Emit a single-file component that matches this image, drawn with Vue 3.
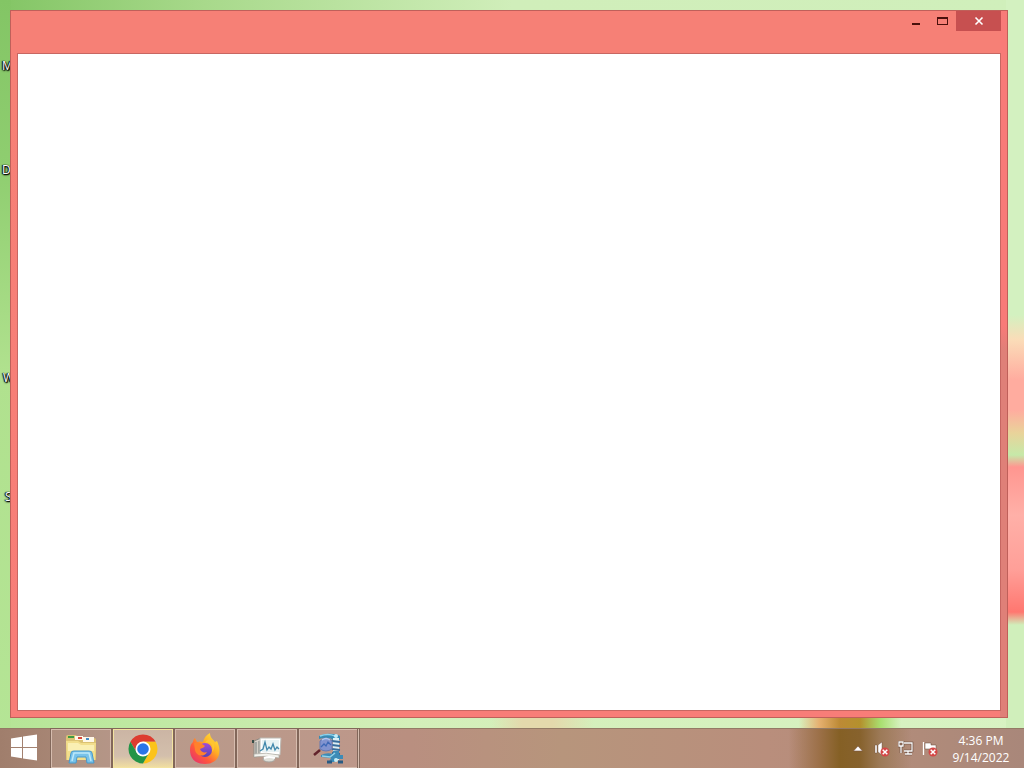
<script setup>
const shortcuts = [
  { label: 'M', top: 58, left: 2 },
  { label: 'D', top: 162, left: 2 },
  { label: 'W', top: 370, left: 3 },
  { label: 'S', top: 489, left: 5 },
]
</script>

<template>
  <div class="desktop">
    <main class="workspace">
      <span
        v-for="item in shortcuts"
        :key="item.label"
        class="shortcut"
        :style="{ top: item.top + 'px', left: item.left + 'px' }"
      >{{ item.label }}</span>
      <section class="window">
        <header class="titlebar">
          <button class="control" aria-label="Minimize">
            <svg width="10" height="10" viewBox="0 0 10 10"><path d="M1 7h8v2H1z" fill="#4a100c" /></svg>
          </button>
          <button class="control" aria-label="Maximize">
            <svg width="11" height="10" viewBox="0 0 11 10"><path d="M0 1h11v8H0zM1 3v5h9V3z" fill="#4a100c" fill-rule="evenodd" /></svg>
          </button>
          <button class="control close" aria-label="Close">
            <svg width="10" height="10" viewBox="0 0 10 10"><path d="M1.500 1.500l7 7M8.500 1.500l-7 7" stroke="#fff" stroke-width="1.600" /></svg>
          </button>
        </header>
        <div class="content"></div>
      </section>
    </main>

    <footer class="taskbar">
      <button class="start" aria-label="Start">
        <svg width="28" height="28" viewBox="0 0 28 28" fill="#fff">
          <path d="M1 4.500L12 2.800V13H1zM13 2.600L27 .5V13H13zM1 14h11v10.200L1 22.600zM13 14h14v12.500L13 24.400z" />
        </svg>
      </button>

      <nav class="apps">
        <button class="app" aria-label="File Explorer">
          <svg width="34" height="32" viewBox="0 0 34 32">
            <path d="M2 4q0-2 2-2h8l2 3h16q2 0 2 2v20H2z" fill="#dcc273" />
            <path d="M4 3h6v2H4z" fill="#3e9b43" />
            <path d="M11 3h8v4h-8zM19 4h11v5H19z" fill="#fff8e8" />
            <path d="M14 4h4v2h-4z" fill="#d7483a" />
            <path d="M22 5h3v2h-3z" fill="#438bc5" />
            <path d="M2 8h12l3 2h15l-1 17H3z" fill="#f2de8c" />
            <path d="M4 10h10l3 2h13v6H4z" fill="#faefb3" />
            <path d="M5 30l2-10q0-2 3-2h15q3 0 3 2l2 10h-7l-1-6H13l-1 6z" fill="#79c3ea" stroke="#4899cb" />
            <path d="M8 28l2-8h15l2 8" fill="none" stroke="#bce9fa" stroke-width="1.500" />
          </svg>
        </button>
        <button class="app active" aria-label="Google Chrome">
          <svg width="30" height="30" viewBox="0 0 30 30">
            <path d="M2.400 7.800A14.500 14.500 0 0 1 27.600 7.800H15L8.800 18.600z" fill="#dd3c30" />
            <path d="M27.600 7.800A14.500 14.500 0 0 1 15 29.500L21.200 18.600 15 7.800z" fill="#fbc31a" />
            <path d="M2.400 7.800A14.500 14.500 0 0 0 15 29.500l6.200-10.900H8.800z" fill="#239447" />
            <circle cx="15" cy="15" r="7.500" fill="#fff" />
            <circle cx="15" cy="15" r="5.800" fill="#2a75e8" />
          </svg>
        </button>
        <button class="app" aria-label="Firefox">
          <svg width="32" height="32" viewBox="0 0 32 32">
            <defs>
              <linearGradient id="fox" x1="1" y1="0" x2=".1" y2="1">
                <stop offset="0" stop-color="#fff145" />
                <stop offset=".4" stop-color="#ffae24" />
                <stop offset=".68" stop-color="#ff583b" />
                <stop offset="1" stop-color="#e42f72" />
              </linearGradient>
              <linearGradient id="globe" x1="0" y1="0" x2="0" y2="1">
                <stop offset="0" stop-color="#a14bd8" />
                <stop offset="1" stop-color="#5644b4" />
              </linearGradient>
            </defs>
            <path d="M6 5l2 4q3-1 6 0c1-4 3-7 7-9 0 5 3 6 5 9l2-1c5 10 3 23-12 23C5 31 1 24 1 17c0-4 1-6 3-8 0-2 1-3 2-4z" fill="url(#fox)" />
            <circle cx="16" cy="17" r="7" fill="url(#globe)" />
            <path d="M5 10c4-1 8 0 11 3-1 2-4 2-5 3 1 3 4 4 7 3-3 6-11 4-12-2z" fill="#ff812c" />
            <path d="M16 10c6-2 9 3 7 9 3-3 3-8 1-11-2-3-5-3-8 2z" fill="#ffc531" />
          </svg>
        </button>
        <button class="app" aria-label="Performance Monitor">
          <svg width="32" height="32" viewBox="0 0 32 32">
            <path d="M3 8l7-3v18l-7 1z" fill="#d5d0c8" stroke="#8f8a83" />
            <path d="M5 9v14M8 8v14" stroke="#777e7d" />
            <path d="M2 7v3" stroke="#374d47" stroke-width="2" />
            <ellipse cx="18" cy="26" rx="6" ry="3" fill="#dedfd8" stroke="#a5a49f" />
            <path d="M9 5h21l-1 17H9z" fill="#fff" stroke="#bcb9b3" />
            <path d="M11 7h17v12H11z" fill="#e9f3f4" />
            <path d="M9 18l3-2 2-7 2 8 2-3 2 2 2-5 2 6 2-3 2 2" fill="none" stroke="#4388ac" stroke-width="1.300" />
            <path d="M3 21q12-2 25 1v3q-12-3-25-1z" fill="#f3f3ee" stroke="#aaa79f" stroke-width=".7" />
            <path d="M13 25q5-2 11 0" fill="none" stroke="#fff" stroke-width="2" />
          </svg>
        </button>
        <button class="app" aria-label="Process Viewer">
          <svg width="34" height="34" viewBox="0 0 34 34">
            <path d="M7 4q8-4 19-1l2 1v4h-7q-4-4-14-1z" fill="#398bb4" />
            <path d="M8 4q8-3 15 0" fill="none" stroke="#91d3ea" stroke-width="1.500" />
            <path d="M21 6h6v22h-6z" fill="#dceef3" />
            <path d="M20 9l8 1m-8 3l8 1m-8 3l8 1m-8 3l8 1" stroke="#386c9b" stroke-width="1.800" />
            <path d="M9 23q6-3 12-1v-3h6v4h4v4h-6l-3 3h-5l2-4-10-1z" fill="#3d8bb6" />
            <path d="M10 24l8 1 5-4" fill="none" stroke="#91d3ea" stroke-width="1.500" />
            <path d="M15 30h5m6 0h5" stroke="#285b83" stroke-width="3" />
            <circle cx="24" cy="4" r="2" fill="#c3edf7" />
            <circle cx="24" cy="28" r="2" fill="#c3edf7" />
            <path d="M8 18l-6 5" stroke="#62232b" stroke-width="2.500" />
            <path d="M8 9q6-6 12 0v8q-6 4-12 0z" fill="#8193cf" stroke="#6579b3" />
            <path d="M9 15l3-3 2 2 2-4 3 3" fill="none" stroke="#3d68b6" stroke-width="1.300" />
            <path d="M10 8q4-3 8 0" fill="none" stroke="#b1caf1" stroke-width="1.500" />
          </svg>
        </button>
      </nav>
      <i class="end"></i>

      <div class="tray">
        <button class="tray-icon" aria-label="Show hidden icons">
          <svg width="16" height="16" viewBox="0 0 16 16"><path d="M3.500 10L8 5l4.500 5z" fill="#fff" stroke="#75513f" stroke-width=".6" /></svg>
        </button>
        <button class="tray-icon" aria-label="Volume muted">
          <svg width="16" height="16" viewBox="0 0 16 16">
            <path d="M1 4h2v8H1zM4 4l4-3v13l-4-3z" fill="#fff" stroke="#65483b" stroke-width=".4" />
            <circle cx="11" cy="11" r="4.500" fill="#d44746" />
            <path d="M8.700 8.700l4.600 4.600m0-4.600l-4.600 4.600" stroke="#fff" stroke-width="1.500" />
          </svg>
        </button>
        <button class="tray-icon" aria-label="Network">
          <svg width="16" height="16" viewBox="0 0 16 16" fill="none">
            <path d="M6 2h8v8H6M10 10v3m-3 0h7M1 1h4v4H1zM3 5v7" stroke="#5d4034" stroke-width="2.500" />
            <path d="M6 2h8v8H6M10 10v3m-3 0h7M1 1h4v4H1zM3 5v7" stroke="#fff" stroke-width="1.300" />
          </svg>
        </button>
        <button class="tray-icon" aria-label="Action Center">
          <svg width="16" height="16" viewBox="0 0 16 16">
            <path d="M1.500 1v13" stroke="#fff" stroke-width="1.300" />
            <path d="M3 2h6v2h5v6H9V8H3z" fill="#fff" stroke="#65483b" stroke-width=".5" />
            <circle cx="11" cy="11" r="4.500" fill="#d44746" />
            <path d="M8.700 8.700l4.600 4.600m0-4.600l-4.600 4.600" stroke="#fff" stroke-width="1.500" />
          </svg>
        </button>
      </div>
      <button class="clock"><time>4:36 PM</time><span>9/14/2022</span></button>
    </footer>
  </div>
</template>

<style>
body { margin: 0; }
</style>

<style scoped>
* { box-sizing: border-box; }
button { border: 0; padding: 0; background: none; font: inherit; color: inherit; }
svg { display: block; flex: none; }
.desktop {
  min-height: 100vh;
  display: flex;
  flex-direction: column;
  font-family: "Open Sans", "Noto Sans", sans-serif;
  background:
    linear-gradient(90deg, transparent 78%, #e6b070 80%, #bd8a35 82%, #b4912d 84%, #a9df70 86%, transparent 88%) 0 100% / 100% 50px no-repeat,
    linear-gradient(90deg, transparent 48%, #e4d9ac 51%, #e4d9ac 54%, transparent 58%) 0 100% / 100% 50px no-repeat,
    linear-gradient(#d3f1c0 0, #d3f1c0 315px, #fbdcb8 340px, #ffac9f 380px, #ffac9f 410px, #e9d39a 433px, #c6e9a9 455px, #ff9690 467px, #ffb0a8 515px, #ff9f98 570px, #ff7770 612px, #d0efbb 625px) 100% 0 / 18px 100% no-repeat,
    linear-gradient(#83c565 0, #8fce70 170px, #b0e18e 370px, #b5e596 100%) 0 0 / 11px 100% no-repeat,
    linear-gradient(90deg, #83c565 0, #a8d98b 20%, #d0eeba 50%, #d0efbb 100%) 0 0 / 100% 20px no-repeat,
    linear-gradient(90deg, #b5e596 0, #d3efb9 40%, #d8f3c3 100%);
}
.workspace {
  position: relative;
  flex: 1;
  display: flex;
  padding: 10px 16px 10px 10px;
}
.shortcut {
  position: absolute;
  font-size: 12px;
  line-height: 16px;
  color: #fff;
  text-shadow: 0 0 1px #000, 1px 1px 1px #000, 0 1px 2px #000, -1px 0 1px #000;
}
.window {
  position: relative;
  flex: 1;
  display: flex;
  flex-direction: column;
  padding: 0 6px 6px;
  border: 1px solid #bf605a;
  background:
    linear-gradient(#f87b78 0, #f87b78 315px, #df8078 340px, #df8078 100%) 100% 0 / 7px 100% no-repeat,
    linear-gradient(#f68076 0, #f68076 50px, #f87d78 100%);
}
.titlebar {
  height: 42px;
  display: flex;
  justify-content: flex-end;
  align-items: flex-start;
}
.control {
  width: 27px;
  height: 20px;
  display: flex;
  align-items: center;
  justify-content: center;
}
.close { width: 45px; background: #c75050; }
.content { flex: 1; background: #fff; border: 1px solid #c76762; }
.taskbar {
  height: 40px;
  display: flex;
  color: #fff;
  border-top: 1px solid #947a65;
  background:
    linear-gradient(90deg, transparent 77%, #9c7048 80%, #856025 82%, #87622d 84%, #9d7a58 86%, transparent 89%),
    linear-gradient(90deg, #a07e6c 0, #b39282 14%, #b98f80 40%, #b7957c 55%, #b98e7c 75%, #b08b7a 90%, #a9877a 100%);
}
.start {
  width: 51px;
  display: flex;
  align-items: center;
  padding: 0 0 2px 10px;
}
.apps { display: flex; gap: 2px; }
.app {
  width: 60px;
  display: flex;
  align-items: center;
  justify-content: center;
  border: 1px solid #d6bcae;
  outline: 1px solid #82675a;
  background: rgba(255, 255, 255, .08);
}
.app.active {
  border-color: #f3e3a1;
  background: linear-gradient(#cbb5a4, #d3bfac 70%, #f0dda1);
}
.end {
  width: 2px;
  margin-left: -2px;
  border-left: 1px solid #82675a;
  border-right: 1px solid #d6bcae;
}
.tray {
  margin-left: auto;
  display: flex;
  align-items: center;
  gap: 8px;
  padding-top: 1px;
}
.tray-icon { width: 16px; height: 16px; }
.clock {
  width: 86px;
  display: flex;
  flex-direction: column;
  align-items: center;
  justify-content: center;
  padding-top: 1px;
  font-size: 12px;
  line-height: 17px;
}
</style>
